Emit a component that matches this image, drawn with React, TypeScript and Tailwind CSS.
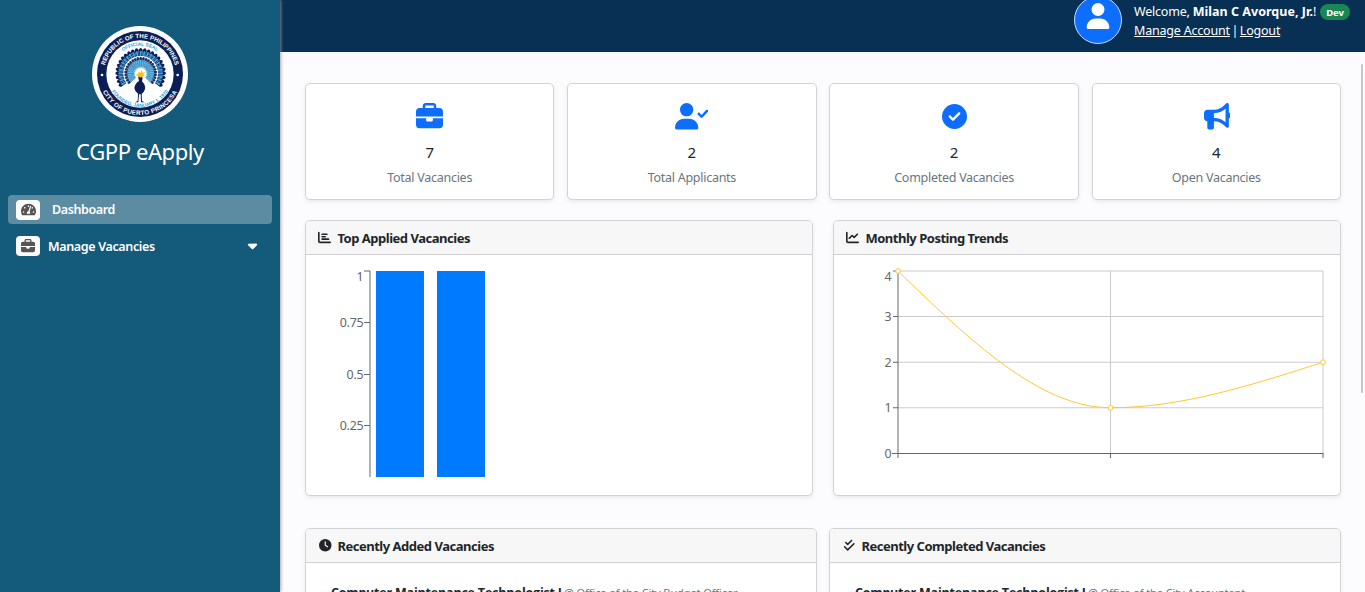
import type { ReactNode } from "react";
import { FaTachometerAlt } from "react-icons/fa";
import {
  FaBriefcase,
  FaBullhorn,
  FaCaretDown,
  FaChartBar,
  FaChartLine,
  FaCheckDouble,
  FaCircleCheck,
  FaClock,
  FaUser,
} from "react-icons/fa6";

const rays = (from: number, to: number, count: number) =>
  Array.from({ length: count }, (_, i) => from + ((to - from) * i) / (count - 1));

function Seal() {
  return (
    <svg viewBox="0 0 288 288" className="size-24" aria-label="City seal">
      <defs>
        <path id="ring-top" d="M36 144 A108 108 0 0 1 252 144" />
        <path id="ring-bottom" d="M21 144 A123 123 0 0 0 267 144" />
        <path id="inner-top" d="M59 144 A85 85 0 0 1 229 144" />
        <path id="inner-bottom" d="M45 144 A99 99 0 0 0 243 144" />
      </defs>
      <circle cx="144" cy="144" r="144" fill="#fff" />
      <circle cx="144" cy="144" r="129" fill="#0b1f56" />
      <circle cx="144" cy="144" r="101" fill="#fff" />
      <circle cx="30" cy="147" r="4" fill="#fff" />
      <circle cx="257" cy="147" r="4" fill="#fff" />
      <g transform="translate(146 142)">
        {rays(-120, 120, 25).map((a) => (
          <g key={a} transform={`rotate(${a})`}>
            <path d="M-3 -40 L-6 -70 Q0 -82 6 -70 L3 -40Z" fill="#0b1f56" />
            <path d="M-1.5 -48 L-3.4 -65 Q0 -70 3.4 -65 L1.5 -48Z" fill="#3aa5e6" />
          </g>
        ))}
        <circle r="52" fill="#fff" />
        {rays(-128, 128, 25).map((a) => (
          <g key={a} transform={`rotate(${a})`}>
            <path d="M-1.5 -20 L-4 -46 Q0 -53 4 -46 L1.5 -20Z" fill="#19326a" />
            <path d="M-1 -16 L-2.6 -40 L2.6 -40 L1 -16Z" fill="#5cbcea" />
          </g>
        ))}
        <circle r="17" cy="3" fill="#fff" />
      </g>
      <path d="M138 151 Q149 148 152 155 L150 166 Q162 178 159 190 Q155 201 149 204 L150 225 L158 229 L147 229 L146 205 L141 205 L139 229 L129 229 L137 225 L138 203 Q128 196 127 186 Q129 172 141 165Z" fill="#0b1f56" />
      <path d="M137 151 L131 144 L139 145 L138 136 L145 141 L149 131 L152 141 L160 138 L154 147 L160 150 L151 152 Q144 157 137 151Z" fill="#fbbd22" />
      <g fontFamily="Liberation Sans, sans-serif" fontWeight="700" textAnchor="middle">
        <g fill="#fff" fontSize="18.5">
          <text><textPath href="#ring-top" startOffset="50%">REPUBLIC OF THE PHILIPPINES</textPath></text>
          <text><textPath href="#ring-bottom" startOffset="50%" letterSpacing="1">CITY OF PUERTO PRINCESA</textPath></text>
        </g>
        <g fill="#23a4dc" fontSize="14.5">
          <text><textPath href="#inner-top" startOffset="50%">OFFICIAL SEAL</textPath></text>
          <text><textPath href="#inner-bottom" startOffset="50%">FOUNDED, JANUARY 1, 1970</textPath></text>
        </g>
      </g>
    </svg>
  );
}

function UserCheck() {
  return (
    <svg viewBox="0 0 640 512" className="mr-px h-[26.6px] w-[33.3px]" fill="currentColor">
      <path d="M224 256c70.7 0 128-57.3 128-128S294.7 0 224 0S96 57.3 96 128s57.3 128 128 128zM274.7 304H173.3C77.6 304 0 381.6 0 477.3C0 496.5 15.5 512 34.7 512h378.6c19.2 0 34.7-15.5 34.7-34.7C448 381.6 370.4 304 274.7 304z" />
      <path d="M632.3 134.4c-9.7-9-24.9-8.5-33.9 1.3l-87.1 93.7l-38.4-38.4c-9.4-9.4-24.6-9.4-33.9 0s-9.4 24.6 0 33.9l56 56C499.5 285.5 505.6 288 512 288h.4c6.5-.1 12.7-2.9 17.2-7.7l104-112C642.6 158.6 642 143.4 632.3 134.4z" />
    </svg>
  );
}

function StatCard({ icon, value, label }: { icon: ReactNode; value: string; label: string }) {
  return (
    <div className="flex h-[117px] flex-col items-center rounded-[5px] border border-[#d2d3d5] bg-white pt-[19px] shadow-[0_2px_4px_rgba(0,0,0,0.075)]">
      <div className="flex h-[27px] items-start justify-center text-[#0d6efd]">{icon}</div>
      <div className="mt-[11px] h-[22px] text-[15px] leading-[22px] text-[#212529]">{value}</div>
      <div className="mt-[5px] text-[12.5px] leading-5 tracking-[-0.27px] text-[#6c757d]">{label}</div>
    </div>
  );
}

function Panel({ icon, title, className, children }: { icon: ReactNode; title: string; className: string; children: ReactNode }) {
  return (
    <section className={`overflow-hidden rounded-[5px] border border-[#d2d3d5] bg-white shadow-[0_2px_4px_rgba(0,0,0,0.075)] ${className}`}>
      <header className="flex h-[34px] items-center border-b border-[#cfcfcf] bg-[#f7f7f7] pl-3 text-[#212529]">
        <span className="flex w-[19.4px] items-center">{icon}</span>
        <h2 className="text-[13px] leading-5 font-bold tracking-[-0.48px]">{title}</h2>
      </header>
      {children}
    </section>
  );
}

function BarChart() {
  return (
    <svg width="506" height="240" viewBox="306 255 506 240" className="block">
      <path d="M370 271V477M364 271H370M364 322.5H370M364 374.5H370M364 425.5H370" stroke="#666" fill="none" />
      <g fill="#666" fontSize="12.4" textAnchor="end" letterSpacing="-0.2">
        <text x="363.5" y="281">1</text>
        <text x="363.5" y="327">0.75</text>
        <text x="363.5" y="379">0.5</text>
        <text x="363.5" y="430">0.25</text>
      </g>
      <path d="M376 271h48v206h-48zM437 271h48v206h-48z" fill="#007bff" />
    </svg>
  );
}

function LineChart() {
  const points = [[898, 271], [1110.5, 407.75], [1323, 362.25]];
  return (
    <svg width="506" height="240" viewBox="834 255 506 240" className="block">
      <path d="M898 271H1323M898 316.5H1323M898 362.25H1323M898 407.75H1323M1110.5 271V453M1323 271V453" stroke="#ccc" fill="none" />
      <path d="M898 271V458M892 453.5H1323.5M893 271H898M893 316.5H898M893 362.25H898M893 407.75H898M1110.5 453V458M1323 453V458" stroke="#666" fill="none" />
      <g fill="#666" fontSize="12.4" textAnchor="end">
        <text x="891.7" y="281">4</text>
        <text x="891.7" y="321">3</text>
        <text x="891.7" y="367">2</text>
        <text x="891.7" y="412">1</text>
        <text x="891.7" y="458">0</text>
      </g>
      <path d="M898 271C968.8 339.4 1039.7 407.75 1110.5 407.75C1181.3 407.75 1252.2 385 1323 362.25" stroke="#ffc733" fill="none" />
      {points.map(([x, y]) => (
        <circle key={x} cx={x} cy={y} r="2.4" fill="#fff" stroke="#ffc733" />
      ))}
    </svg>
  );
}

function Vacancy({ title, office }: { title: string; office: string }) {
  return (
    <div className="flex items-baseline pt-[20px] pl-[25px] leading-5 whitespace-nowrap">
      <span className="w-[229px] font-['Open_Sans','Noto_Sans',sans-serif] text-[12.5px] font-bold tracking-[-0.2px] text-[#212529]">{title}</span>
      <span className="ml-1 text-[11px] tracking-[-0.1px] text-[#6c757d]">@ {office}</span>
    </div>
  );
}

export default function App() {
  return (
    <div className="relative flex h-[592px] w-[1365px] overflow-hidden bg-[#fcfcfe] font-['Noto_Sans','Open_Sans',sans-serif]">
      <aside className="z-10 flex w-[280px] shrink-0 flex-col items-center bg-[#145a7a] pt-[26px] text-white shadow-[1px_0_3px_rgba(150,150,155,0.8)]">
        <Seal />
        <h1 className="mt-[11px] h-9 text-[22px] leading-9 tracking-[-0.4px]">CGPP eApply</h1>
        <nav className="mt-[26px] w-full px-2 text-[12.5px] font-semibold tracking-[-0.38px]">
          <a className="flex h-[29px] items-center rounded bg-[#5c8ca1] pl-2">
            <span className="flex h-5 w-6 items-center justify-center rounded bg-white text-[#555]"><FaTachometerAlt size={15} /></span>
            <span className="ml-3 pt-[2px]">Dashboard</span>
          </a>
          <a className="mt-[7px] flex h-[29px] items-center pl-2">
            <span className="flex h-5 w-6 items-center justify-center rounded bg-white text-[#555]"><FaBriefcase size={14} /></span>
            <span className="ml-2 pt-[3px] tracking-[-0.35px]">Manage Vacancies</span>
            <FaCaretDown size={15} className="mr-[12px] ml-auto" />
          </a>
        </nav>
      </aside>

      <div className="flex min-w-0 grow flex-col">
        <header className="flex h-[52px] shrink-0 items-start justify-end bg-[#082f54] pr-[15px] text-white">
          <div className="-mt-1 flex size-12 items-center justify-center rounded-full border border-[#c8dcff] bg-[#0d6efd]">
            <FaUser size={26} className="-mt-2" />
          </div>
          <div className="ml-3 w-[216px] pt-[2px] text-[12.5px] leading-[19px] tracking-[-0.2px] whitespace-nowrap">
            <div className="flex items-center">
              <span>Welcome, <b className="tracking-[0.02px]">Milan C Avorque, Jr.</b>!</span>
              <span className="ml-auto flex h-4 w-[30px] items-center justify-center rounded-full bg-[#198754] pt-px text-[9.5px] font-bold">Dev</span>
            </div>
            <div className="flex">
              <a className="underline">Manage Account</a>
              <span className="w-[10px] text-center">|</span>
              <a className="underline">Logout</a>
            </div>
          </div>
        </header>

        <main className="flex flex-col pt-[31px] pr-6 pl-[25px]">
          <div className="grid grid-cols-4 gap-[12.8px]">
            <StatCard icon={<FaBriefcase size={27} />} value="7" label="Total Vacancies" />
            <StatCard icon={<UserCheck />} value="2" label="Total Applicants" />
            <StatCard icon={<FaCircleCheck size={25} className="mt-px" />} value="2" label="Completed Vacancies" />
            <StatCard icon={<FaBullhorn size={26.5} className="ml-px" />} value="4" label="Open Vacancies" />
          </div>
          <div className="mt-5 grid grid-cols-2 gap-5">
            <Panel icon={<FaChartBar size={13} />} title="Top Applied Vacancies" className="h-[276px]"><BarChart /></Panel>
            <Panel icon={<FaChartLine size={13} />} title="Monthly Posting Trends" className="h-[276px]"><LineChart /></Panel>
          </div>
          <div className="mt-8 grid grid-cols-2 gap-3">
            <Panel icon={<FaClock size={12.5} className="ml-px" />} title="Recently Added Vacancies" className="h-[276px]">
              <Vacancy title="Computer Maintenance Technologist I" office="Office of the City Budget Officer" />
            </Panel>
            <Panel icon={<FaCheckDouble size={12.5} className="ml-px" />} title="Recently Completed Vacancies" className="h-[276px]">
              <Vacancy title="Computer Maintenance Technologist I" office="Office of the City Accountant" />
            </Panel>
          </div>
        </main>
      </div>
      <div className="absolute top-16 right-[2px] h-[329px] w-[2px] rounded-full bg-[#c6c6c8]" />
    </div>
  );
}
